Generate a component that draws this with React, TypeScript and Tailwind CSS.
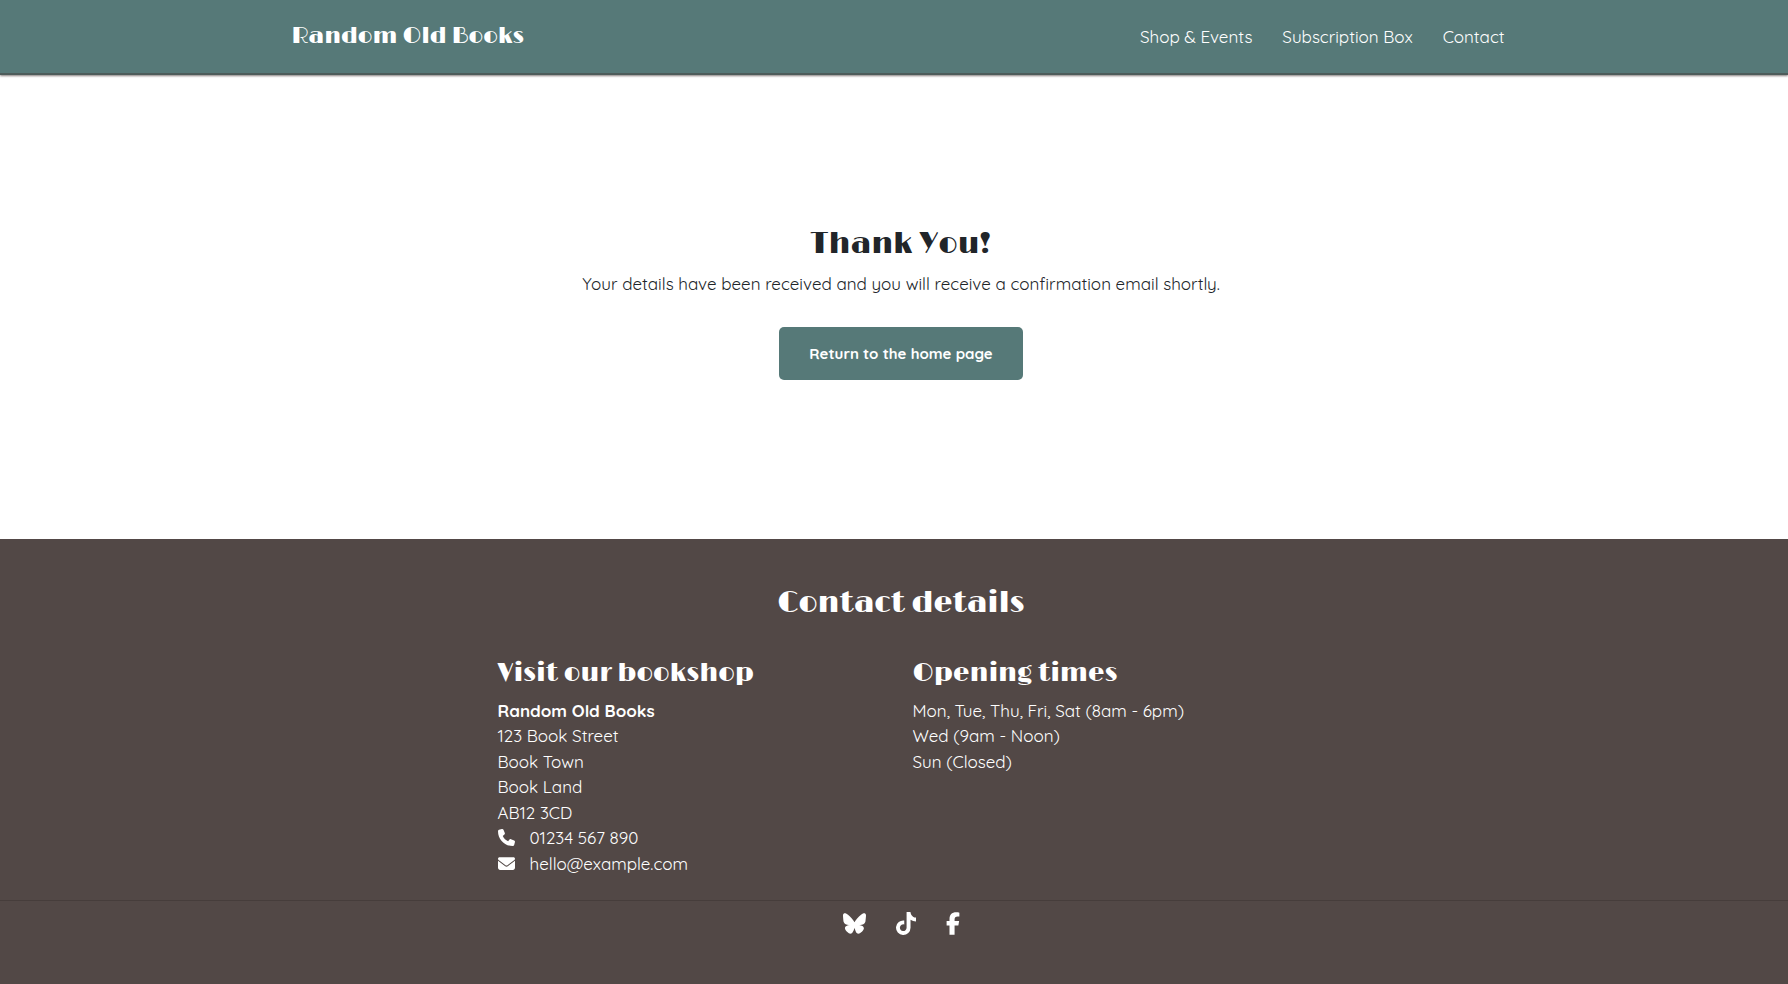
import { FaBluesky, FaEnvelope, FaFacebookF, FaPhone, FaTiktok } from "react-icons/fa6";

const navLinks = ["Shop & Events", "Subscription Box", "Contact"];
const address = ["123 Book Street", "Book Town", "Book Land", "AB12 3CD"];
const hours = ["Mon, Tue, Thu, Fri, Sat (8am - 6pm)", "Wed (9am - Noon)", "Sun (Closed)"];
const social = [
  { name: "Bluesky", Icon: FaBluesky, size: "h-[23px] w-[23px]" },
  { name: "TikTok", Icon: FaTiktok, size: "h-[23px] w-[20px]" },
  { name: "Facebook", Icon: FaFacebookF, size: "h-[23px] w-[14px]" },
];

const display = "font-['Limelight','DejaVu_Serif',serif]";

export default function App() {
  return (
    <div className="flex min-h-screen flex-col bg-white font-['Quicksand','Lato',sans-serif] text-[17px] leading-normal text-[#212529]">
      <header className="border-b-2 border-[#4d5c5a] bg-[#567978] pl-2 text-white shadow-[0_1px_2px_rgba(80,70,68,0.7)]">
        <div className="mx-auto flex h-[73px] max-w-[1213px] items-center justify-between">
          <a href="#" className={`${display} text-[23px]`}>Random Old Books</a>
          <nav className="flex gap-[30px]">
            {navLinks.map((label) => (
              <a key={label} href="#">{label}</a>
            ))}
          </nav>
        </div>
      </header>

      <main className="flex flex-col items-center pt-[151px] pb-[159px] pl-[14px] text-center">
        <h1 className={`${display} text-[30px] leading-9`}>Thank You!</h1>
        <p className="mt-[9px]">Your details have been received and you will receive a confirmation email shortly.</p>
        <a href="#" className="mt-[30px] rounded-[5px] bg-[#567978] px-[30px] py-[15px] text-[15px] leading-[23px] font-bold text-white">
          Return to the home page
        </a>
      </main>

      <footer className="grow bg-[#524846] text-white">
        <div className="pt-[46px] pb-6 pl-[14px]">
          <h2 className={`${display} text-center text-[30px] leading-9`}>Contact details</h2>
          <div className="mx-auto mt-9 grid max-w-[807px] grid-cols-[415px_1fr]">
            <section>
              <h3 className={`${display} text-[26px] leading-8`}>Visit our bookshop</h3>
              <address className="mt-[9px] not-italic">
                <strong>Random Old Books</strong>
                {address.map((line) => (
                  <div key={line}>{line}</div>
                ))}
                <div className="flex items-center gap-[15px]"><FaPhone />01234 567 890</div>
                <div className="flex items-center gap-[15px]"><FaEnvelope />hello@example.com</div>
              </address>
            </section>
            <section>
              <h3 className={`${display} text-[26px] leading-8`}>Opening times</h3>
              <div className="mt-[9px]">
                {hours.map((line) => (
                  <div key={line}>{line}</div>
                ))}
              </div>
            </section>
          </div>
        </div>
        <div className="flex justify-center gap-[30px] border-t border-[#463d3b] pt-[11px] pl-[14px]">
          {social.map(({ name, Icon, size }) => (
            <a key={name} href="#" aria-label={name}><Icon className={size} /></a>
          ))}
        </div>
      </footer>
    </div>
  );
}
